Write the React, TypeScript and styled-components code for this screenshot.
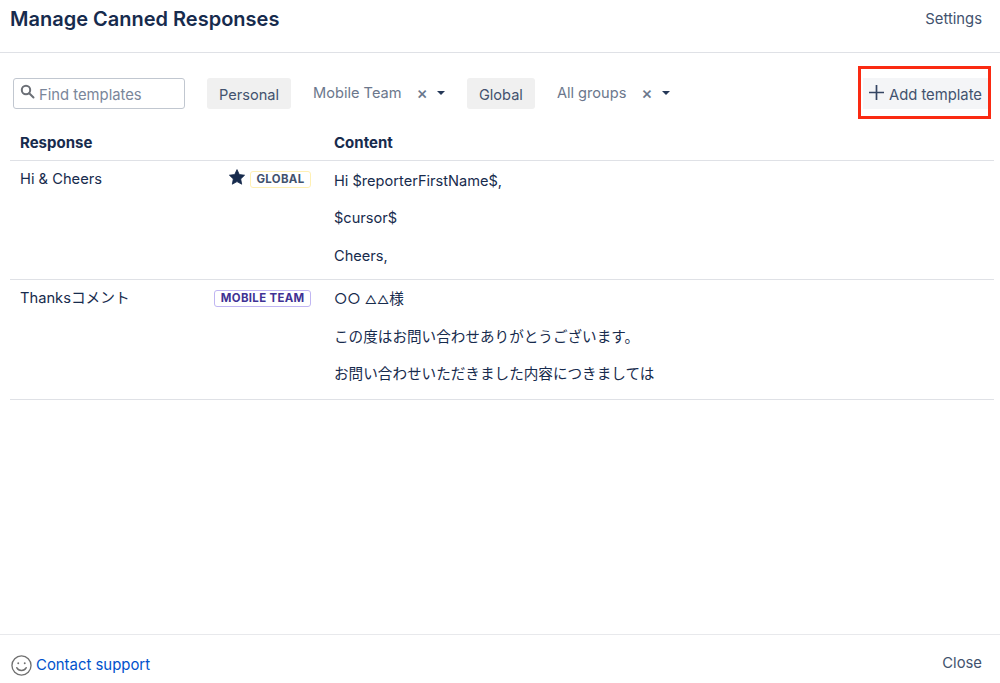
import React from 'react';
import styled, { createGlobalStyle } from 'styled-components';

const GlobalStyle = createGlobalStyle`
    html, body {
        margin: 0;
        background: #fff;
    }
    body {
        font-family: Inter, "Noto Sans CJK JP", sans-serif;
        color: #172b4d;
        font-size: 14.6px;
    }
`;

const Page = styled.div`
    width: 1000px;
    height: 683px;
    display: flex;
    flex-direction: column;
    overflow: hidden;
`;

const Header = styled.header`
    height: 53px;
    flex: none;
    box-sizing: border-box;
    display: flex;
    align-items: center;
    justify-content: space-between;
    padding: 0 18px 14px 10px;
    border-bottom: 1px solid #dfe1e6;
`;

const Title = styled.h1`
    margin: 0;
    font-size: 20px;
    font-weight: 600;
    color: #172b4d;
`;

const TextLink = styled.span`
    font-size: 14.8px;
    color: #42526e;
`;

const SettingsLink = styled(TextLink)`
    margin-bottom: 1px;
`;

const CloseLink = styled(TextLink)`
    margin-top: 4px;
`;

const Toolbar = styled.div`
    display: flex;
    align-items: center;
    height: 31px;
    margin-top: 25px;
    padding: 0 12px 0 13px;
`;

const Search = styled.div`
    width: 172px;
    height: 31px;
    box-sizing: border-box;
    display: flex;
    align-items: center;
    gap: 4px;
    padding: 2px 6px 0;
    margin-right: 22px;
    border: 1.5px solid #c1c7d0;
    border-radius: 3px;
    color: #7a869a;
    font-size: 14.8px;

    svg {
        flex: none;
        margin-top: -6px;
    }
`;

const Toggle = styled.div`
    height: 31px;
    box-sizing: border-box;
    display: flex;
    align-items: center;
    padding: 2px 12px 0;
    background: #f0f0f0;
    border-radius: 3px;
    color: #42526e;
    font-size: 14.6px;
`;

const Select = styled.div`
    box-sizing: border-box;
    display: flex;
    align-items: center;
    padding: 0 22px 1px;
    color: #6b778c;
    font-size: 14.6px;
`;

const Clear = styled.span`
    font-size: 17px;
    font-weight: 500;
    line-height: 1;
    color: #6b778c;
    margin: 0 9px 0 15px;
`;

const Caret = styled.span`
    width: 0;
    height: 0;
    border-left: 4px solid transparent;
    border-right: 4px solid transparent;
    border-top: 4px solid #253858;
`;

const AddButton = styled.div`
    position: relative;
    height: 31px;
    box-sizing: border-box;
    display: flex;
    align-items: center;
    gap: 5px;
    margin-left: auto;
    padding: 2px 6px 0;
    background: #f4f5f7;
    color: #42526e;
    font-size: 14.8px;

    svg {
        margin-top: -4px;
    }

    &::after {
        content: '';
        position: absolute;
        inset: -12px -3px -10px -5px;
        border: 3px solid #fa2a12;
    }
`;

const Table = styled.div`
    margin: 18px 6px 0 10px;
`;

const Row = styled.div<{ $height: number }>`
    height: ${p => p.$height}px;
    box-sizing: border-box;
    display: grid;
    grid-template-columns: 314px 1fr;
    padding-left: 10px;
    border-bottom: 1px solid #dfe1e6;
`;

const HeadCell = styled.div`
    font-weight: 700;
    font-size: 15px;
    line-height: 17px;
    padding-top: 7px;
    color: #172b4d;
`;

const ResponseCell = styled.div`
    display: flex;
    align-items: flex-start;
    justify-content: space-between;
    padding: 8px 23px 0 0;
    line-height: 20px;
    font-size: 14.7px;
`;

const BadgeGroup = styled.div`
    display: flex;
    align-items: center;
    gap: 5px;
    margin-top: 2px;

    svg {
        margin-top: -5px;
    }
`;

const Badge = styled.span<{ $color: string; $border: string }>`
    display: inline-block;
    padding: 0 5.5px;
    height: 17px;
    box-sizing: border-box;
    line-height: 15px;
    border: 1px solid ${p => p.$border};
    border-radius: 3px;
    font-size: 11.4px;
    font-weight: 700;
    letter-spacing: 0.35px;
    color: ${p => p.$color};
`;

const ContentCell = styled.div<{ $top: number; $gap: number }>`
    padding-top: ${p => p.$top}px;
    font-size: 14.6px;

    p {
        margin-bottom: ${p => p.$gap}px;
    }
`;

const Para = styled.p`
    margin: 0;
    line-height: 20px;
`;

const SmallShape = styled.span`
    font-size: 12px;
`;

const Footer = styled.footer`
    height: 49px;
    margin-top: auto;
    flex: none;
    box-sizing: border-box;
    display: flex;
    align-items: center;
    justify-content: space-between;
    padding: 4px 18px 0 10px;
    border-top: 1px solid #e8e9ec;
`;

const Support = styled.div`
    display: flex;
    align-items: center;
    gap: 4px;
    padding-top: 8px;
    color: #0052cc;
    font-size: 14.9px;

    svg {
        margin-left: 1px;
    }
`;

const SearchIcon = () => (
    <svg width="15" height="15" viewBox="0 0 15 15" fill="none" stroke="#6b6f76" strokeWidth="2">
        <circle cx="6" cy="6" r="4.2" />
        <path d="M9.2 9.2l4.3 4.3" strokeLinecap="round" />
    </svg>
);

const Star = () => (
    <svg width="16" height="16" viewBox="0 0 16 16" fill="#172b4d">
        <path d="M8 .6l2.3 4.9 5.3.7-3.9 3.7 1 5.3L8 12.6l-4.7 2.6 1-5.3L.4 6.2l5.3-.7z" stroke="#172b4d" strokeWidth="0.8" strokeLinejoin="round" />
    </svg>
);

const Plus = () => (
    <svg width="15" height="15" viewBox="0 0 15 15" stroke="#344563" strokeWidth="1.7">
        <path d="M7.5 0v15M0 7.5h15" />
    </svg>
);

const Smile = () => (
    <svg width="21" height="21" viewBox="0 0 22 22" fill="none" stroke="#707070" strokeWidth="1.4">
        <circle cx="11" cy="11" r="10" />
        <circle cx="7.6" cy="8.6" r="1" fill="#707070" stroke="none" />
        <circle cx="14.4" cy="8.6" r="1" fill="#707070" stroke="none" />
        <path d="M6 13.2c1 2 3 3 5 3s4-1 5-3" strokeLinecap="round" />
    </svg>
);

export default function App() {
    return (
        <Page>
            <GlobalStyle />
            <Header>
                <Title>Manage Canned Responses</Title>
                <SettingsLink>Settings</SettingsLink>
            </Header>
            <Toolbar>
                <Search><SearchIcon />Find templates</Search>
                <Toggle>Personal</Toggle>
                <Select>
                    Mobile Team
                    <Clear>×</Clear>
                    <Caret />
                </Select>
                <Toggle>Global</Toggle>
                <Select>
                    All groups
                    <Clear>×</Clear>
                    <Caret />
                </Select>
                <AddButton><Plus />Add template</AddButton>
            </Toolbar>
            <Table>
                <Row $height={34}>
                    <HeadCell>Response</HeadCell>
                    <HeadCell>Content</HeadCell>
                </Row>
                <Row $height={119}>
                    <ResponseCell>
                        Hi &amp; Cheers
                        <BadgeGroup>
                            <Star />
                            <Badge $color="#42526e" $border="#fff0b3">GLOBAL</Badge>
                        </BadgeGroup>
                    </ResponseCell>
                    <ContentCell $top={10} $gap={17.3}>
                        <Para>Hi $reporterFirstName$,</Para>
                        <Para>$cursor$</Para>
                        <Para>Cheers,</Para>
                    </ContentCell>
                </Row>
                <Row $height={120}>
                    <ResponseCell>
                        Thanksコメント
                        <BadgeGroup>
                            <Badge $color="#403294" $border="#c0b6f2">MOBILE TEAM</Badge>
                        </BadgeGroup>
                    </ResponseCell>
                    <ContentCell $top={9} $gap={17}>
                        <Para>○○ <SmallShape>△△</SmallShape>様</Para>
                        <Para>この度はお問い合わせありがとうございます。</Para>
                        <Para>お問い合わせいただきました内容につきましては</Para>
                    </ContentCell>
                </Row>
            </Table>
            <Footer>
                <Support><Smile />Contact support</Support>
                <CloseLink>Close</CloseLink>
            </Footer>
        </Page>
    );
}
